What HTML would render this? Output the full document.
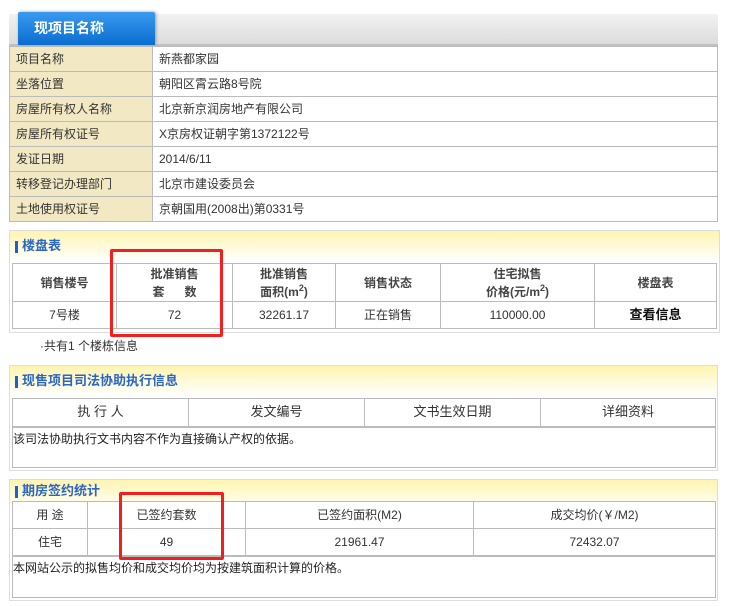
<!DOCTYPE html>
<html><head><meta charset="utf-8">
<style>
*{margin:0;padding:0;box-sizing:border-box}
body{width:730px;height:607px;background:#fff;position:relative;font-family:"Liberation Sans","Noto Sans CJK SC","WenQuanYi Zen Hei",sans-serif;font-size:12px;color:#333;overflow:hidden}
.a{position:absolute}
table{border-collapse:collapse;table-layout:fixed;position:absolute;background:#fff}
td{border:1px solid #bbb;text-align:center;overflow:hidden;white-space:nowrap;padding:0;line-height:14px}
.info td{text-align:left;padding-left:6px;color:#333}
.info td.l{background:#f2e8c3}
.hd{background:linear-gradient(#fff4b0,#fff 30px);border:1px solid #ddd;}
.tt{position:absolute;left:5px;top:8px;font-size:13px;font-weight:bold;color:#2a66c7;padding-left:7px;line-height:14px}
.tt:before{content:"";position:absolute;left:0;top:2px;width:3px;height:12px;background:#1a5fd6}
.red{position:absolute;border:3px solid #f21f1f;border-radius:2px}
.sp{position:relative;top:-5px;font-size:9px;line-height:0}
</style></head><body>
<div class="a" style="left:9px;top:14px;width:709px;height:32px;background:linear-gradient(#f2f2f2,#dcdcdc);border-bottom:2px solid #c0c0c0"></div>
<div class="a" style="left:18px;top:12px;width:137px;height:33px;background:linear-gradient(#3a9af0,#0a6ed0);border-radius:2px 2px 0 0;box-shadow:1px 0 3px #999;color:#fff;font-weight:bold;font-size:14px;line-height:33px;padding-left:16px">现项目名称</div>
<table class="info" style="left:9px;top:46px;width:709px">
<colgroup><col style="width:143px"><col></colgroup>
<tr style="height:25px"><td class="l">项目名称</td><td>新燕都家园</td></tr>
<tr style="height:25px"><td class="l">坐落位置</td><td>朝阳区霄云路8号院</td></tr>
<tr style="height:25px"><td class="l">房屋所有权人名称</td><td>北京新京润房地产有限公司</td></tr>
<tr style="height:25px"><td class="l">房屋所有权证号</td><td>X京房权证朝字第1372122号</td></tr>
<tr style="height:25px"><td class="l">发证日期</td><td>2014/6/11</td></tr>
<tr style="height:25px"><td class="l">转移登记办理部门</td><td>北京市建设委员会</td></tr>
<tr style="height:25px"><td class="l">土地使用权证号</td><td>京朝国用(2008出)第0331号</td></tr>
</table>

<div class="a hd" style="left:9px;top:230px;width:711px;height:103px"><div class="tt">楼盘表</div></div>
<table style="left:12px;top:263px;width:705px">
<colgroup><col style="width:104px"><col style="width:116px"><col style="width:103px"><col style="width:105px"><col style="width:154px"><col></colgroup>
<tr style="height:38px;font-weight:bold;color:#444"><td>销售楼号</td><td style="line-height:18px">批准销售<br>套&nbsp;&nbsp;&nbsp;&nbsp;&nbsp;&nbsp;数</td><td style="line-height:18px">批准销售<br>面积(m<span class="sp">2</span>)</td><td>销售状态</td><td style="line-height:18px">住宅拟售<br>价格(元/m<span class="sp">2</span>)</td><td>楼盘表</td></tr>
<tr style="height:27px"><td>7号楼</td><td>72</td><td>32261.17</td><td>正在销售</td><td>110000.00</td><td style="font-size:13px;font-weight:bold;color:#111">查看信息</td></tr>
</table>
<div class="a" style="left:40px;top:337px;color:#333">·共有1 个楼栋信息</div>

<div class="a hd" style="left:9px;top:365px;width:709px;height:106px"><div class="tt">现售项目司法协助执行信息</div></div>
<table style="left:12px;top:398px;width:704px">
<colgroup><col style="width:176px"><col style="width:176px"><col style="width:176px"><col></colgroup>
<tr style="height:28px;font-size:13px;border-bottom:2px solid #bbb"><td>执 行 人</td><td>发文编号</td><td>文书生效日期</td><td>详细资料</td></tr>
<tr style="height:41px"><td colspan="4" style="text-align:left;vertical-align:top;padding-top:4px;color:#222">该司法协助执行文书内容不作为直接确认产权的依据。</td></tr>
</table>

<div class="a hd" style="left:9px;top:479px;width:709px;height:122px"><div class="tt" style="top:4px">期房签约统计</div></div>
<table style="left:12px;top:501px;width:704px">
<colgroup><col style="width:75px"><col style="width:158px"><col style="width:228px"><col></colgroup>
<tr style="height:27px"><td>用 途</td><td>已签约套数</td><td>已签约面积(M2)</td><td>成交均价(￥/M2)</td></tr>
<tr style="height:27px;border-bottom:2px solid #bbb"><td>住宅</td><td>49</td><td>21961.47</td><td>72432.07</td></tr>
<tr style="height:42px"><td colspan="4" style="text-align:left;vertical-align:top;padding-top:4px;color:#222">本网站公示的拟售均价和成交均价均为按建筑面积计算的价格。</td></tr>
</table>

<div class="red" style="left:110px;top:249px;width:113px;height:88px"></div>
<div class="red" style="left:119px;top:492px;width:105px;height:68px"></div>
</body></html>
